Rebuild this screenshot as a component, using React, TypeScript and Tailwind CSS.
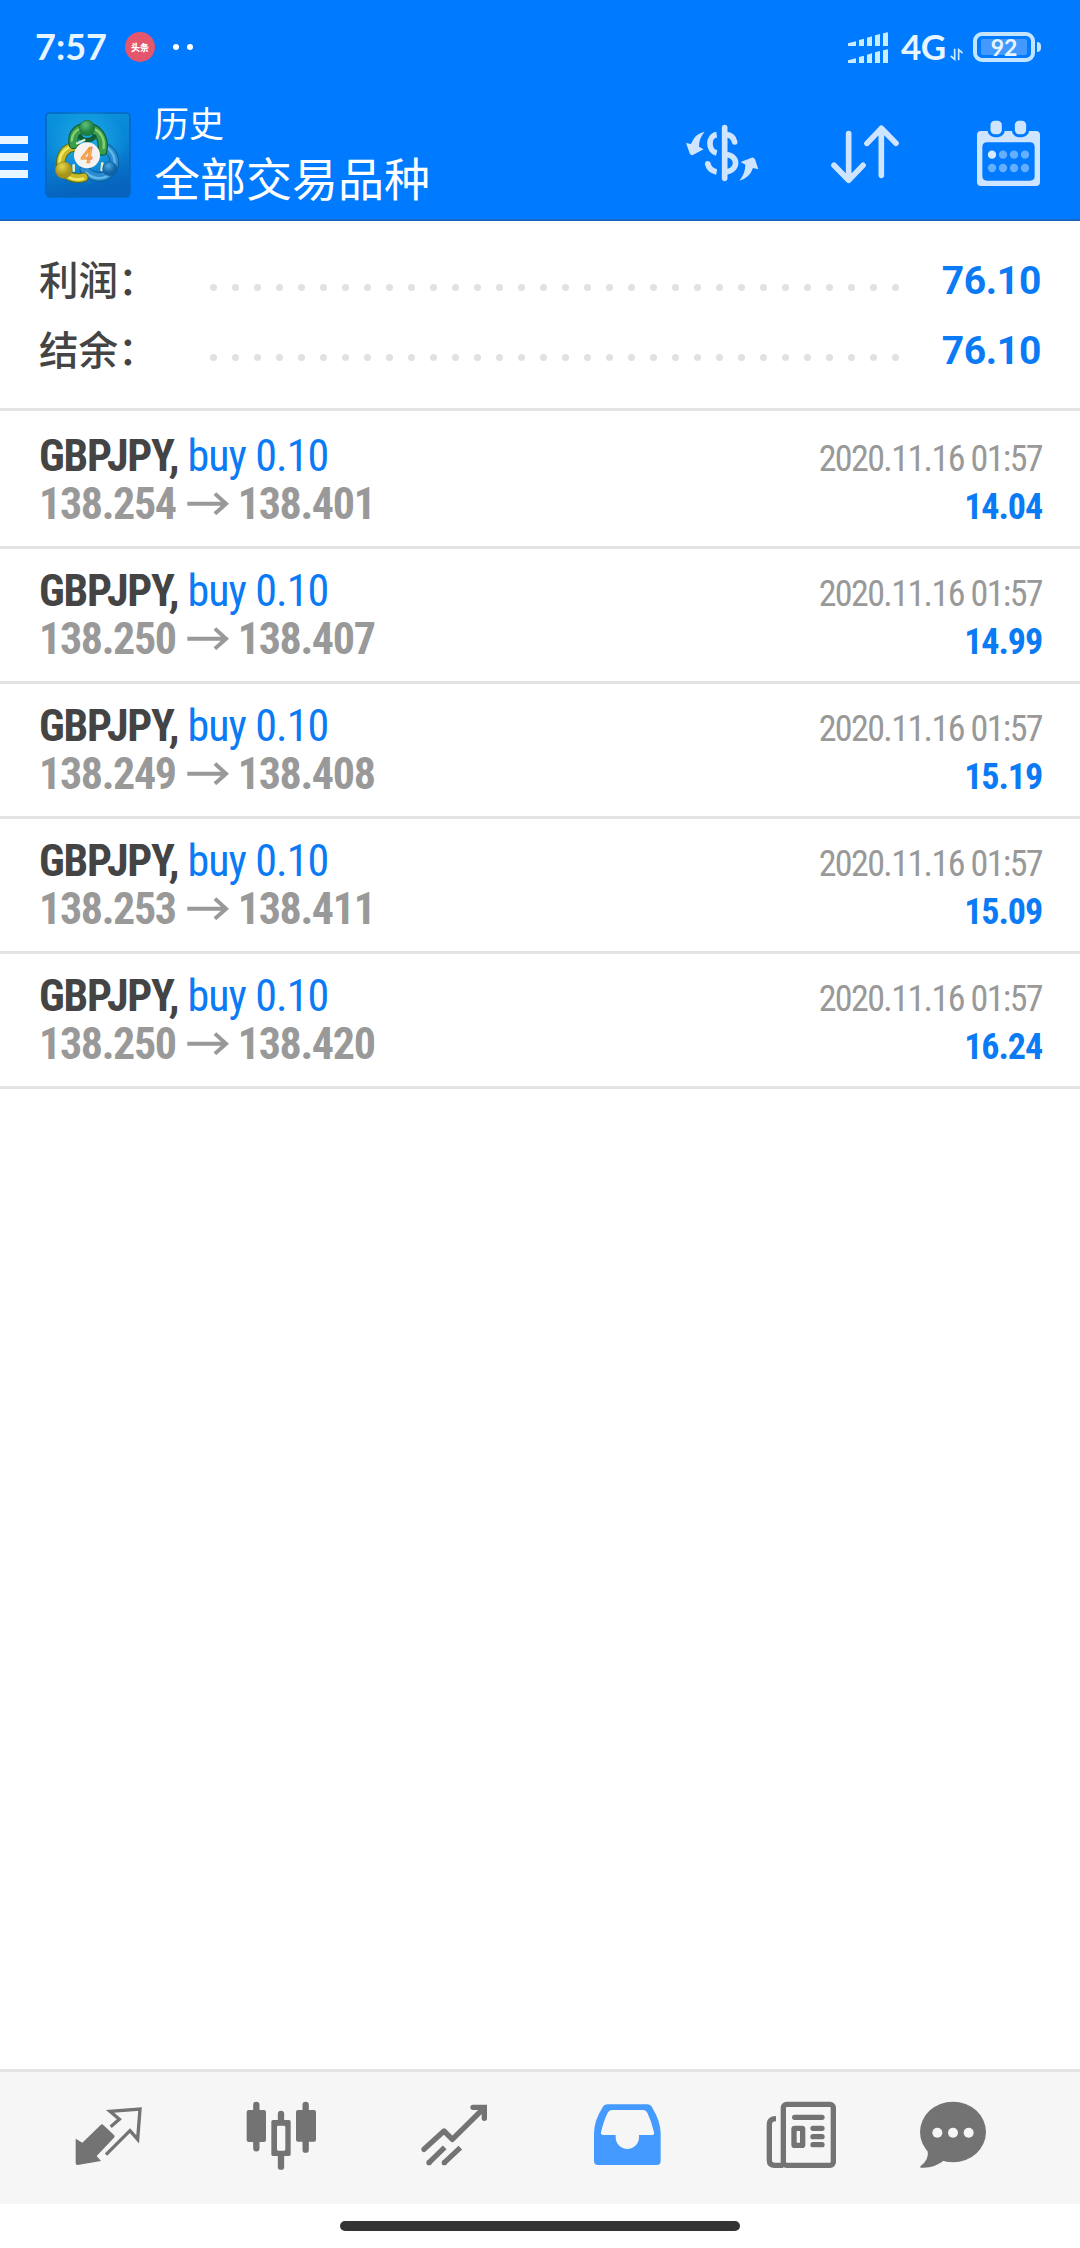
import type { ReactNode } from 'react';

interface Deal {
  id: number;
  symbol: string;
  side: string;
  open: string;
  close: string;
  time: string;
  profit: string;
}

const deals: Deal[] = [
  { id: 1, symbol: 'GBPJPY', side: 'buy 0.10', open: '138.254', close: '138.401', time: '2020.11.16 01:57', profit: '14.04' },
  { id: 2, symbol: 'GBPJPY', side: 'buy 0.10', open: '138.250', close: '138.407', time: '2020.11.16 01:57', profit: '14.99' },
  { id: 3, symbol: 'GBPJPY', side: 'buy 0.10', open: '138.249', close: '138.408', time: '2020.11.16 01:57', profit: '15.19' },
  { id: 4, symbol: 'GBPJPY', side: 'buy 0.10', open: '138.253', close: '138.411', time: '2020.11.16 01:57', profit: '15.09' },
  { id: 5, symbol: 'GBPJPY', side: 'buy 0.10', open: '138.250', close: '138.420', time: '2020.11.16 01:57', profit: '16.24' },
];

const summary = [
  { label: '利润：', value: '76.10' },
  { label: '结余：', value: '76.10' },
];

function Icon({ children, className = '' }: { children: ReactNode; className?: string }) {
  return (
    <svg viewBox="0 0 216 216" fill="none" className={`h-[72px] w-[72px] shrink-0 ${className}`}>
      {children}
    </svg>
  );
}

function StatusBar() {
  return (
    <div className="flex h-[94px] items-center pl-[35px] pr-[39px] font-['Lato',sans-serif] text-[36px] font-bold leading-none text-[#e6f5ff]">
      <span className="mt-[-2px] w-[90px]">7:57</span>
      <span className="flex h-[30px] w-[30px] items-center justify-center rounded-full bg-[#e4566b] font-['Noto_Sans_CJK_SC',sans-serif] text-[9px] font-black text-white">
        头条
      </span>
      <span className="ml-[18px] h-[6px] w-[6px] rounded-full bg-white" />
      <span className="ml-[8px] h-[6px] w-[6px] rounded-full bg-white" />

      <svg viewBox="0 0 120 93" className="ml-auto h-[31px] w-[40px]" fill="#c9ecff">
        {[42, 93].map((b) => (
          <g key={b}>
            <path d={`M0 ${b} v-8 l24 -6 v14 z`} />
            <path d={`M33 ${b} v-18 l15 -4 v22 z`} />
            <path d={`M57 ${b} v-25 l15 -4 v29 z`} />
            <path d={`M81 ${b} v-32 l15 -4 v36 z`} />
            <path d={`M105 ${b} v-38 l15 -3 v41 z`} />
          </g>
        ))}
      </svg>
      <span className="ml-[13px] mt-[-2px] w-[46px] text-[35px] tracking-[-0.5px]">4G</span>
      <svg viewBox="0 0 39 39" className="ml-[3px] mt-[14px] h-[13px] w-[13px]" fill="none" stroke="#c9ecff" strokeWidth="5">
        <path d="M14 2 V34 L2 24 M26 37 V5 L38 15" />
      </svg>
      <span className="ml-[10px] flex h-[30px] w-[62px] items-center justify-center rounded-[9px] border-4 border-[#c4e5ff]">
        <span className="flex h-[16px] w-[46px] items-center justify-center rounded-[2px] bg-[#4499ff] text-[23px] text-[#e6f5ff]">92</span>
      </span>
      <span className="ml-[2px] h-[10px] w-[4px] rounded-r-full bg-[#c4e5ff]" />
    </div>
  );
}

function Logo() {
  return (
    <svg viewBox="0 0 258 258" className="ml-[17px] h-[86px] w-[86px]">
      <defs>
        <linearGradient id="tile" x1="0" y1="0" x2="0.2" y2="1">
          <stop offset="0" stopColor="#0a93dc" />
          <stop offset="0.5" stopColor="#0784d6" />
          <stop offset="1" stopColor="#0763bd" />
        </linearGradient>
        <radialGradient id="glow">
          <stop offset="0" stopColor="#2cbcf0" />
          <stop offset="1" stopColor="#2cbcf0" stopOpacity="0" />
        </radialGradient>
        <radialGradient id="green" cx="0.4" cy="0.3">
          <stop offset="0" stopColor="#62c07c" />
          <stop offset="1" stopColor="#1f8140" />
        </radialGradient>
        <radialGradient id="yellow" cx="0.4" cy="0.3">
          <stop offset="0" stopColor="#e3d84a" />
          <stop offset="1" stopColor="#a8931c" />
        </radialGradient>
        <radialGradient id="blue" cx="0.4" cy="0.3">
          <stop offset="0" stopColor="#4aa9e0" />
          <stop offset="1" stopColor="#1263a8" />
        </radialGradient>
      </defs>
      <rect x="3" y="3" width="252" height="252" rx="12" fill="url(#tile)" stroke="#0668bf" strokeWidth="5" />
      <circle cx="125" cy="100" r="120" fill="url(#glow)" opacity="0.75" />
      <g fill="none" strokeLinecap="round">
        {/* blue arc */}
        <path d="M184 108 C214 128 214 160 196 180 C176 202 142 200 118 172" stroke="#0d5c9c" strokeWidth="29" />
        <path d="M184 108 C214 128 214 160 196 180 C176 202 142 200 118 172" stroke="#2b8cd0" strokeWidth="23" />
        <path d="M188 108 C214 130 214 160 198 182 C178 204 146 204 124 182" stroke="#62b8ea" strokeWidth="7" />
        {/* yellow arc */}
        <path d="M92 104 C58 106 44 134 48 162 C58 192 86 204 116 196" stroke="#4f6d1e" strokeWidth="29" />
        <path d="M92 104 C58 106 44 134 48 162 C58 192 86 204 116 196" stroke="#c9b928" strokeWidth="23" />
        <path d="M84 102 C56 110 44 130 44 152 M72 196 C86 204 100 204 114 200" stroke="#f0ea62" strokeWidth="8" />
        {/* green arc */}
        <path d="M86 96 C80 62 102 48 126 48 C154 48 180 74 172 116" stroke="#0f5f35" strokeWidth="31" />
        <path d="M86 96 C80 62 102 48 126 48 C154 48 180 74 172 116" stroke="#3a9d4a" strokeWidth="24" />
        <path d="M80 86 C82 64 94 54 106 50 M150 52 C170 62 180 84 176 108" stroke="#86cf77" strokeWidth="7" />
        <path d="M106 74 C112 88 140 88 148 74" stroke="#0f5f35" strokeWidth="14" />
        <path d="M118 84 L96 94" stroke="#cfeeda" strokeWidth="7" />
        <path d="M86 160 V176 M172 154 L170 174" stroke="#dff0c0" strokeWidth="8" />
      </g>
      <circle cx="126" cy="48" r="23" fill="url(#green)" stroke="#17703a" strokeWidth="2" />
      <circle cx="56" cy="174" r="25" fill="url(#yellow)" stroke="#8f8420" strokeWidth="2" />
      <circle cx="194" cy="170" r="21" fill="url(#blue)" stroke="#0e5896" strokeWidth="2" />
      <circle cx="126" cy="130" r="39" fill="#f6f2ef" />
      <text x="126" y="153" textAnchor="middle" fontFamily="Roboto, sans-serif" fontSize="66" fontWeight="500" fontStyle="italic" fill="#f7b26a" stroke="#ee8a30" strokeWidth="2">
        4
      </text>
    </svg>
  );
}

function Header() {
  return (
    <header className="flex h-[221px] flex-col border-b-2 border-[#1568c4] bg-[#007aff]">
      <StatusBar />
      <div className="flex flex-1 items-start">
        <div className="mt-[42px] flex w-[28px] flex-col gap-[9px]">
          <span className="h-[8px] bg-[#e8f6ff]" />
          <span className="h-[8px] bg-[#e8f6ff]" />
          <span className="h-[8px] bg-[#e8f6ff]" />
        </div>
        <div className="mt-[18px]">
          <Logo />
        </div>
        <div className="ml-[23px] mt-[4px] flex flex-col font-['Noto_Sans_CJK_SC',sans-serif] text-white">
          <span className="text-[35px] leading-[48px]">历史</span>
          <span className="mt-[-1px] text-[46px] leading-[62px]">全部交易品种</span>
        </div>
        <div className="ml-auto mr-[35px] mt-[24px] flex items-center">
          <svg viewBox="0 0 252 216" className="h-[72px] w-[84px]" fill="none" stroke="#cfe4ff" strokeWidth="17">
            <path d="M131 29 V181" strokeLinecap="round" />
            <path d="M107 50 C80 54 80 98 107 105" />
            <path d="M134 49 Q157 51 161 72" strokeLinecap="round" />
            <path d="M133 109 C174 112 174 158 133 162" />
            <path d="M80 136 Q84 158 107 162" />
            <circle cx="80" cy="137" r="8" fill="#cfe4ff" stroke="none" />
            <path d="M71 41 Q54 60 54 86 L68 94 L34 112 Q28 112 26 106 L15 75 L30 78 Q42 46 71 41 Z" fill="#cfe4ff" stroke="none" />
            <path d="M175 188 Q193 166 193 140 L179 132 L212 119 Q219 118 222 124 L232 154 L216 150 Q206 180 175 188 Z" fill="#cfe4ff" stroke="none" />
          </svg>
          <Icon className="ml-[64px]">
            <g stroke="#cfe4ff" strokeWidth="17" strokeLinecap="round" strokeLinejoin="round">
              <path d="M59 47 V185 M15 142 L59 187 L102 142" />
              <path d="M157 172 V31 M114 76 L157 31 L201 76" />
            </g>
          </Icon>
          <Icon className="ml-[72px]">
            <path
              fillRule="evenodd"
              fill="#cfe4ff"
              d="M24 39 H189 Q201 39 201 51 V192 Q201 204 189 204 H24 Q12 204 12 192 V51 Q12 39 24 39 Z M42 73 Q28 73 28 87 V174 Q28 188 42 188 H171 Q185 188 185 174 V87 Q185 73 171 73 Z"
            />
            <g fill="#cfe4ff" stroke="#007aff" strokeWidth="9">
              <rect x="48" y="4" width="43" height="49" rx="17" />
              <rect x="121" y="4" width="43" height="49" rx="17" />
            </g>
            {[57, 90, 123, 156].map((x) => (
              <g key={x} fill="#66aeff">
                <circle cx={x} cy="110" r="12.5" fill={x === 57 ? '#d9eaff' : '#66aeff'} />
                <circle cx={x} cy="150" r="12.5" />
              </g>
            ))}
          </Icon>
        </div>
      </div>
    </header>
  );
}

function SummaryRow({ label, value }: { label: string; value: string }) {
  return (
    <div className="flex h-[70px] items-center">
      <span className="mt-[-5px] w-[171px] whitespace-nowrap font-['Noto_Sans_CJK_SC',sans-serif] text-[39.5px] font-medium leading-[70px] text-[#444]">
        {label}
      </span>
      <span className="mt-[14px] flex gap-[15px]">
        {Array.from({ length: 32 }, (_, i) => (
          <span key={i} className="h-[7px] w-[7px] rounded-full bg-[#e1e1e1]" />
        ))}
      </span>
      <span className="ml-auto mt-[2px] font-['Roboto',sans-serif] text-[39px] font-bold leading-[70px] tracking-[-0.3px] text-[#0a7af5]">{value}</span>
    </div>
  );
}

function DealRow({ deal }: { deal: Deal }) {
  return (
    <li className="flex h-[135px] justify-between border-b-[3px] border-[#e3e3e3] pl-[39px] pr-[38px] pt-[18px] font-['Roboto',sans-serif] font-stretch-condensed">
      <div className="flex flex-col text-[44px] leading-[48px]">
        <div className="flex gap-[9px]">
          <span className="font-bold tracking-[-1.2px] text-[#444]">{deal.symbol},</span>
          <span className="tracking-[-0.9px] text-[#0a7af5]">{deal.side}</span>
        </div>
        <div className="flex items-center font-bold tracking-[-1.35px] text-[#999]">
          <span>{deal.open}</span>
          <svg viewBox="0 0 126 70" className="ml-[11px] mr-[9px] mt-[-2px] h-[23px] w-[42px]" fill="none" stroke="#999" strokeWidth="12">
            <path d="M0 36 H118 M84 5 L118 36 L84 66" />
          </svg>
          <span>{deal.close}</span>
        </div>
      </div>
      <div className="mt-[3px] flex flex-col items-end text-[36px] leading-[48px]">
        <span className="tracking-[-1.6px] text-[#999]">{deal.time}</span>
        <span className="font-bold tracking-[-1.1px] text-[#0a7af5]">{deal.profit}</span>
      </div>
    </li>
  );
}

function TabBar() {
  return (
    <nav className="flex h-[135px] items-start border-t-[3px] border-[#e3e3e3] bg-[#f6f6f6] pl-[72px] pt-[28px] text-[#737373]">
      {/* Quotes */}
      <Icon>
        <path d="M11 116 L31 128 L86 75 Q90 71 94 75 L126 105 Q130 109 126 113 L74 168 L87 183 L17 195 Q11 195 11 189 Z" fill="currentColor" />
        <path d="M116 80 L142 58 L114 34 L204 27 L197 118 L174 92 L102 164" stroke="currentColor" strokeWidth="10" />
      </Icon>
      {/* Charts */}
      <Icon className="ml-[101px]">
        <g stroke="currentColor" strokeWidth="19" strokeLinecap="round">
          <path d="M34 15 V145 M182 15 V149 M108 42 V62 M108 166 V200" />
        </g>
        <rect x="5" y="30" width="58" height="96" rx="6" fill="currentColor" />
        <rect x="153" y="30" width="60" height="95" rx="6" fill="currentColor" />
        <path fill="currentColor" fillRule="evenodd" d="M84 60 H132 Q137 60 137 65 V163 Q137 168 132 168 H84 Q79 168 79 163 V65 Q79 60 84 60 Z M100 77 Q96 77 96 81 V148 Q96 152 100 152 H117 Q121 152 121 148 V81 Q121 77 117 77 Z" />
      </Icon>
      {/* Trade */}
      <Icon className="ml-[101px]">
        <g stroke="currentColor" strokeWidth="16">
          <path d="M18 148 L78 93 L103 118 L198 24" strokeLinecap="round" strokeLinejoin="round" />
          <path d="M165 22 H199 V55" strokeLinecap="round" />
          <path d="M33 188 L80 142 M79 188 L127 143" />
        </g>
        <circle cx="33" cy="188" r="8" fill="currentColor" />
        <circle cx="79" cy="188" r="8" fill="currentColor" />
      </Icon>
      {/* History */}
      <Icon className="ml-[101px] text-[#449aff]">
        <path
          fill="currentColor"
          fillRule="evenodd"
          d="M50 13 H168 Q178 13 184 23 Q209 65 209 100 V183 Q209 195 197 195 H21 Q9 195 9 183 V100 Q9 63 34 23 Q40 13 50 13 Z M62 30 Q54 30 50 38 Q38 62 30 97 Q29 105 36 105 H74 V112 A35 35 0 0 0 144 112 V105 H184 Q191 105 189 97 Q182 65 169 38 Q165 30 157 30 Z"
        />
      </Icon>
      {/* News */}
      <Icon className="ml-[102px]">
        <g stroke="currentColor" strokeWidth="16">
          <rect x="55" y="13" width="150" height="183" rx="10" />
          <path d="M33 56 Q13 56 13 74 V180 Q13 196 29 196 H55" />
          <rect x="87" y="85" width="26" height="51" rx="2" />
          <path d="M89 52 H171 M144 85 H171 M144 110 H171 M144 134 H171" strokeLinecap="round" />
        </g>
      </Icon>
      {/* Chat */}
      <Icon className="ml-[79px]">
        <ellipse cx="111" cy="96" rx="99" ry="91" fill="currentColor" />
        <path d="M35 150 Q40 180 13 199 V203 Q52 207 86 180 Z" fill="currentColor" />
        <g fill="#f6f6f6">
          <circle cx="64" cy="98" r="15" />
          <circle cx="111" cy="98" r="15" />
          <circle cx="158" cy="98" r="15" />
        </g>
      </Icon>
    </nav>
  );
}

export default function App() {
  return (
    <div className="flex h-[2248px] w-[1080px] flex-col overflow-hidden bg-white">
      <Header />
      <section className="h-[190px] border-b-[3px] border-[#e3e3e3] pl-[39px] pr-[39px] pt-[24px]">
        {summary.map((row) => (
          <SummaryRow key={row.label} {...row} />
        ))}
      </section>
      <ul className="flex-1 pt-[3px]">
        {deals.map((deal) => (
          <DealRow key={deal.id} deal={deal} />
        ))}
      </ul>
      <TabBar />
      <div className="flex h-[44px] justify-center pt-[17px]">
        <span className="h-[10px] w-[400px] rounded-full bg-[#333]" />
      </div>
    </div>
  );
}
